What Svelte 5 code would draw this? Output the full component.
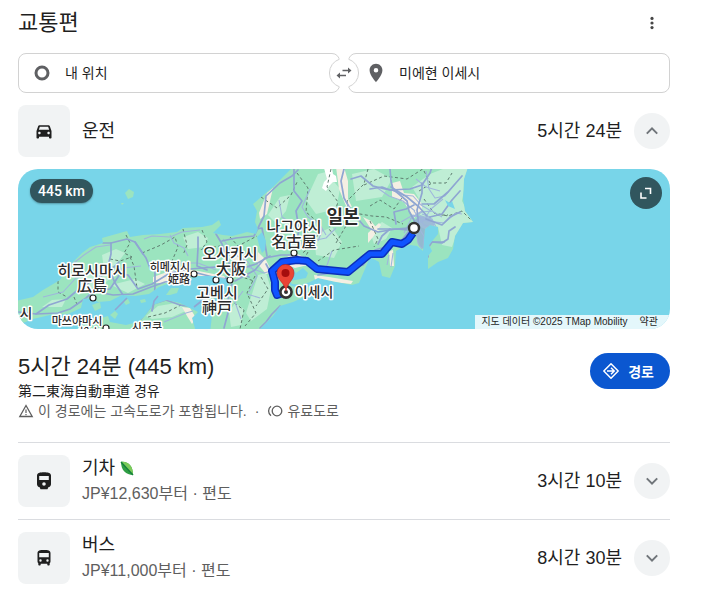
<script>
  let origin = $state('내 위치');
  let destination = $state('미에현 이세시');

  function swap() {
    [origin, destination] = [destination, origin];
  }

  const modes = [
    { id: 'train', name: '기차', eco: true, fare: 'JP¥12,630부터 · 편도', time: '3시간 10분' },
    { id: 'bus', name: '버스', eco: false, fare: 'JP¥11,000부터 · 편도', time: '8시간 30분' }
  ];

  // Map geometry, in the map's own 652 x 160 coordinate space
  const honshu =
    'M-2 132L2 131 15 128 25 121 42 111 49 99 64 84 72 78 85 74 84 69 109 62 112 68 125 66 142 65 159 63 165 59 184 58 194 56 201 51 203 56 195 64 205 66 214 67 222 65 229 63 238 65 240 60 237 53 239 42 235 35 249 23 255 18 265 8 275 -2 450 -2 446 10 445 30 447 42 455 53 445 54 437 67 435 80 430 89 420 93 410 100 410 87 414 82 411 76 420 65 420 58 412 56 407 60 406 70 405 82 399 77 392 76 385 78 378 82 377 97 372 109 364 107 361 93 352 88 347 100 341 114 334 116 318 113 300 109 292 113 284 116 274 115 272 112 288 109 290 104 285 99 278 104 274 98 272 103 272 116 280 119 292 118 290 124 284 129 275 133 262 137 255 147 242 160 240 164 192 164 194 146 196 136 205 130 210 122 211 111 198 107 180 107 165 111 152 114 141 118 131 125 117 127 104 126 92 132 80 133 75 129 65 130 63 139 50 145 32 146 15 150 5 154 -2 153Z';
  const islands = [
    'M55 163L64 156 80 150 90 147 92 153 108 156 120 153 126 148 135 136 149 131 162 134 172 139 180 143 174 149 178 163Z',
    'M-2 158L6 155 12 163H-2Z',
    'M107 24l4-4 5 3-1 5-5 2z', 'M103 34l3 0-2 2z',
    'M148 126l5-7 8 0-2 5-7 2z', 'M184 132l10-6 3 2-5 13-5 5-4-3z',
    'M74 136l8-3 1 6-6 3z', 'M92 146l5-4 3 3-3 5z', 'M105 132l5-2 2 4-4 2z', 'M122 131l5-1 1 3-5 1z'
  ];
  const pale = [
    'M60 112l16-10 14-3 8 6-15 12-17 4z', 'M84 86l14-6 9 4-9 12-12 4z',
    'M93 116l24-6 10 5-17 9z', 'M165 68l15-5 10 6-4 9-16 2z',
    'M128 147l12-10 18-3 12 7-16 7-20 2z',
    'M300 5l8-2 14 17-4 20-20 5-10-14z', 'M240 106l8-2 5 16-4 20-16 12-5-8z',
    'M334 5l22-5 18 10-10 18-26 4z', 'M296 66l18-8 10 15-8 16-18-3z', 'M352 62l12-9 10 6-6 11-12 5z',
    'M394 18L412 5 430 -2 450 0 444 32 456 54 438 66 434 78 424 76 420 58 412 56 407 60 398 56 404 40 400 28z',
    'M250 46l12-18 10-2-4 16-10 12z', 'M211 143l6-9 9 6-3 16-10 2z', 'M24 138l10-7 14-1-4 8z'
  ];
  const beige = [
    'M135 108l17-6 23-1 31 6 6 8-8 0-12-7-20-2-24 8-13 0z', 'M265 90l12-6 11 5 2 7-13 3-11-4z',
    'M318 -2h8l4 14 0 18 4 8-6-1-7-17z', 'M374 14l8-2 4 12 10 1 8 10 0 8-8 6-10-16-12-5z',
    'M240 83l8 8 6 12-6 2-9-11z', 'M212 78l10 2 4 11-8 4-6-7z',
    'M296 106l15 2 24 4-2 3-36-4z', 'M164 138l8 1 6 10-4 6-5-8z', 'M249 24l6-5-6 26-7 5-1-6z',
    'M350 64l11-10 2 2-8 12-5 6z', 'M371 82l4-1 1 16-4 0z', 'M345 48l8 4 8 10-6 1z'
  ];
  const motorways = [
    'M0 143l18 2 13-9 18-6 12-10 14-9 16-8 10-10',
    'M18 145l22-1 12-4 16-11 8-7 16-2 10-15 8 1 10 14 14-5 18-11 20-4 25-2 20 2 14 8',
    'M75 122l20 4 20-1 18-7 14-5 18-3 14-6 20 5 14 1',
    'M85 74l8 0 0 11-3 12 7 17 8 12', 'M93 74l16-4 8 3 8 12', 'M117 73l11 16 4 10 5 3 0 15-1 17-2 8',
    'M123 150l12-15 13-4 14 5 14 2 14-11 9-6 9-12', 'M180 68l0 11-1 18 10 4',
    'M198 65l6 10 6 18 8 8 20-6 14-8', 'M217 112l20-11 10-12 16-3 15 0 12 10 12 7',
    'M204 72l14-3 18-2 6-12 4-8 2-20 14-13 12-7 6-6', 'M222 63l10-2 12-2 3 16 2 12',
    'M276 0l0 22 8 10-6 10 3 18-3 18',
    'M326 0l-3 12 3 17 8 14 12 14 14 6 18-3 12 1', 'M300 106l20-3 25-7 12-15 14-4 13-6 10-13',
    'M333 10l10-3 12 10 12 3 12 2', 'M352 20l12-2 8 3 20-1 12-4 8-12 2-6',
    'M372 0l1 12 2 8 14 12 2 10 6 11', 'M373 18l16 10 12 10 8 9', 'M401 58l-2-17 5-17 0-10',
    'M404 35l12 0 14-12 14-16', 'M412 48l12-3 10-14 8-9', 'M378 55l-2-12 12-3 8-4', 'M360 60l18 0 12-1',
    'M372 60l-8 7-4 8', 'M414 73l10 1 6-4 1-8 6-4', 'M410 88l0-9 4-6 12 0', 'M408 50l16 6 8-8 10-5',
    'M262 137l-8 8-6 8-6 6', 'M248 95l8 15 2 16', 'M214 115l-4 10 1 15-5 19'
  ];
  const minorRoads = [
    'M25 128l20-5 13-14 17-6 17 4 13-8 18-2', 'M52 97l14-11 12-8 14-2', 'M126 70l8-3 18 1 12-5 18-2',
    'M152 66l4 8 10 5 4 8', 'M205 70l11 15 14 8 9 14-8 16', 'M140 100l22-6 18 0 18 7',
    'M292 20l-8 18 6 10 12 8 6 10', 'M261 31l3 17 12 8', 'M276 80l8-6 24-5 10-10',
    'M307 102l7-20', 'M230 98l16 6 14-4', 'M300 52l4 10 -4 10',
    'M358 18l13 9 14 5 12 10', 'M371 20l14 6 10 1 8 9 10 6', 'M408 2l3 18 6 9 10-2 10-12',
    'M383 53l12-7 14 6 17 2 12-10 6 1', 'M402 61l4 6 -1 12', 'M398 60l2 14 4 6', 'M404 45l8 3 4 8-6 8',
    'M400 48l14 2 4 8', 'M375 84l-2 14', 'M371 86l-2 10', 'M392 50l12-7 10-1 10 6', 'M398 10l10 8 14 4',
    'M425 30l-12 10-8 12', 'M229 125l13 4', 'M223 150l-6-17 8-11', 'M146 153l22-9 7-2',
    'M396 42l10 14 8 2', 'M395 66l6-12 11-6', 'M386 64l8-16 10-6'
  ];
  const borders =
    'M108 66l4 8-6 10 8 4-12 4-10-2M40 112l0 11 9 5M56 128l4 10M112 88l4 9 3 22M124 84l19-8 14-8 3 10-6 14M165 60l4 16-4 10M184 61l5 12-6 8M184 80l18-3M212 68l8 9 19-10M243 28l16 11 14-13 7-15M279 4l11 15-2 24 14 12-5 20-14 10M313 0l-4 18 11 15-9 27 12 15M350 0l-4 15-17 17 3 18-14 24M346 16l20-9 23 3 22-14M352 37l10-6 14 9 10-14M336 44l18 3 14 1 17 7M352 52l8 18-4 8M406 2l6 12 16 0 6-10M406 30l10 14 14 3 14-5 10 10M401 22l13-8M418 46h12M212 82l13 8-4 17 15 5M237 107l-8 17 9 20-11 13M243 108l7 12-12 17M212 131l14 10-4 19M130 148l17-4 16-8M256 98l18-7M290 83l-8 14M300 92l16-11 25-4';
  const route =
    'M395 64L390 71 384 75 374 73 364 85 352 85 330 103 299 100 289 92 279 91 264 93 254 102 257 113 257 121 259 126 265 124';
  const towns = [[75, 129], [176, 105], [198, 111], [212, 111], [276, 84], [88, 159]];
  const labels = [
    { t: '히로시마시', x: 74, y: 107, s: 15 }, { t: '広島', x: 74, y: 122, s: 15 },
    { t: '히메지시', x: 152, y: 102, s: 11 }, { t: '姫路', x: 161, y: 114, s: 11 },
    { t: '오사카시', x: 212, y: 90, s: 15 }, { t: '大阪', x: 213, y: 105, s: 15 },
    { t: '고베시', x: 199, y: 129, s: 15 }, { t: '神戸', x: 199, y: 144, s: 15 },
    { t: '마쓰야마시', x: 59, y: 156, s: 11 }, { t: '松山', x: 72, y: 168, s: 11 },
    { t: '시코쿠', x: 129, y: 162, s: 11 }, { t: '시', x: 8, y: 149, s: 14 },
    { t: '나고야시', x: 276, y: 63, s: 15 }, { t: '名古屋', x: 276, y: 78, s: 15 },
    { t: '이세시', x: 296, y: 128, s: 14 }
  ];
</script>

{#snippet chevron(up)}
  <svg width="20" height="20" viewBox="0 0 20 20" aria-hidden="true">
    <path d={up ? 'M4.8 12.6L10 7.4l5.2 5.2' : 'M4.8 7.4L10 12.6l5.2-5.2'} fill="none" stroke="#70757a" stroke-width="2" />
  </svg>
{/snippet}

<main>
  <header>
    <h1>교통편</h1>
    <button class="more" aria-label="옵션 더보기">
      <svg width="16" height="16" viewBox="0 0 16 16" fill="#474747" aria-hidden="true">
        <circle cx="8" cy="3.4" r="1.6" /><circle cx="8" cy="8" r="1.6" /><circle cx="8" cy="12.6" r="1.6" />
      </svg>
    </button>
  </header>

  <form class="fields" onsubmit={(e) => e.preventDefault()}>
    <label class="field">
      <svg width="22" height="22" viewBox="0 0 22 22" aria-hidden="true">
        <circle cx="11" cy="11" r="6" fill="none" stroke="#5f6063" stroke-width="3" />
      </svg>
      <input type="text" aria-label="출발지" bind:value={origin} />
    </label>
    <button type="button" class="swap" aria-label="출발지와 도착지 바꾸기" onclick={swap}>
      <svg width="30" height="30" viewBox="0 0 30 30" aria-hidden="true">
        <circle cx="15" cy="15" r="15" fill="#fff" />
        <path d="M10.5 1.2a14.5 14.5 0 0 0 0 27.6M19.5 1.2a14.5 14.5 0 0 1 0 27.6" fill="none" stroke="#d2d2d2" />
        <path d="M13.5 12.5H20M17 17.5h-6.5" stroke="#5f6063" stroke-width="1.6" />
        <path d="M19 9.5l3.5 3-3.5 3zM11 14.5l-3.5 3 3.5 3z" fill="#5f6063" />
      </svg>
    </button>
    <label class="field to">
      <svg width="22" height="22" viewBox="0 0 24 24" aria-hidden="true">
        <path fill="#5f6063" d="M12 2C8.13 2 5 5.13 5 9c0 5.25 7 13 7 13s7-7.75 7-13c0-3.87-3.13-7-7-7zm0 9.5a2.5 2.5 0 0 1 0-5 2.5 2.5 0 0 1 0 5z" />
      </svg>
      <input type="text" aria-label="도착지" bind:value={destination} />
    </label>
  </form>

  <section class="mode driving">
    <span class="tile">
      <svg width="20" height="20" viewBox="0 0 24 24" fill="#1f1f1f" aria-hidden="true">
        <path d="M18.92 6.01C18.72 5.42 18.16 5 17.5 5h-11c-.66 0-1.21.42-1.42 1.01L3 12v8c0 .55.45 1 1 1h1c.55 0 1-.45 1-1v-1h12v1c0 .55.45 1 1 1h1c.55 0 1-.45 1-1v-8l-2.08-5.99zM6.5 16c-.83 0-1.5-.67-1.5-1.5S5.67 13 6.5 13s1.5.67 1.5 1.5S7.33 16 6.5 16zm11 0c-.83 0-1.5-.67-1.5-1.5s.67-1.5 1.5-1.5 1.5.67 1.5 1.5-.67 1.5-1.5 1.5zM5.800 10.500l1.200-3.500h10l1.200 3.500H5.800z" />
      </svg>
    </span>
    <div class="name"><h2>운전</h2></div>
    <span class="time">5시간 24분</span>
    <button class="toggle" aria-label="운전 접기" aria-expanded="true">{@render chevron(true)}</button>
  </section>

  <div class="map">
    <svg class="canvas" viewBox="0 0 652 160" preserveAspectRatio="xMidYMid slice" role="img" aria-label="경로 지도">
      <defs>
        <clipPath id="land">
          <path d={honshu} />
          {#each islands as d}<path {d} />{/each}
        </clipPath>
      </defs>
      <rect x="-400" y="-200" width="1500" height="600" fill="#78d5e9" />
      <path d={honshu} fill="#9be4bf" />
      {#each islands as d}<path {d} fill="#9be4bf" />{/each}
      <g clip-path="url(#land)">
        {#each pale as d}<path {d} fill="#bfeed5" />{/each}
        {#each beige as d}<path {d} fill="#f4efe3" />{/each}
        <path d="M306 -1h8l1 6 3 2 1 6-4 0-4 4-3 5-4-3 2-6 3-3z" fill="#fff" />
        <path d={borders} fill="none" stroke="#5f7d70" stroke-width="1" stroke-dasharray="3 2.5" />
        <path d="M396 52l6-6 10 3 4 7-8 5-1 20-6-4-3-12-6-3z" fill="#91a6d6" opacity=".7" />
        <g fill="none" stroke="#9fb6dc" stroke-width="1.1" stroke-linejoin="round">
          {#each minorRoads as d}<path {d} />{/each}
        </g>
        <g fill="none" stroke="#8fa6d2" stroke-width="1.7" stroke-linejoin="round" stroke-linecap="round">
          {#each motorways as d}<path {d} />{/each}
        </g>
      </g>
      <path d="M239 68l5-5 4 9-1 9-3 3-3-8zM427 31l5 3 2-2 3 8-7-3z" fill="#78d5e9" />
      <path d="M134 142l2-10 4-5M176 138l14-11 9-6M97 141l12-12" fill="none" stroke="#8fa6d2" stroke-width="1.6" />

      {#each towns as [cx, cy]}
        <circle {cx} {cy} r="3" fill="#fff" stroke="#222" stroke-width="1.2" />
      {/each}
      <path d={route} fill="none" stroke="#0c2fb8" stroke-width="8" stroke-linejoin="round" />
      <path d={route} fill="none" stroke="#0f53ff" stroke-width="5" stroke-linejoin="round" />
      <circle cx="396" cy="59" r="5" fill="#fff" stroke="#333" stroke-width="2.4" />
      <circle cx="268" cy="123" r="5.6" fill="#fff" stroke="#333" stroke-width="2.6" />
      <circle cx="268" cy="123" r="2" fill="#333" />
      <path d="M268 122c-1-8-9-11-9-18a8.5 8.5 0 0 1 17 0c0 7-7 10-8 18z" fill="#ea4335" stroke="#c5221f" stroke-width=".6" />
      <circle cx="267.5" cy="104" r="4" fill="#a50e0e" />

      {#each labels as l}
        <text x={l.x} y={l.y} font-size={l.s}>{l.t}</text>
      {/each}
      <text class="country" x="325" y="54" font-size="18">일본</text>
    </svg>
    <span class="distance">445 km</span>
    <button class="expand" aria-label="지도 확대">
      <svg width="16" height="16" viewBox="0 0 16 16" fill="none" stroke="#fff" stroke-width="1.6" aria-hidden="true">
        <path d="M7 3.5h5.5V9M3 7.500v5.500h5.500" />
      </svg>
    </button>
    <div class="credits"><span>지도 데이터 ©2025 TMap Mobility</span><a href="#terms">약관</a></div>
  </div>

  <section class="summary">
    <div class="details">
      <h3>5시간 24분 (445 km)</h3>
      <p>第二東海自動車道 경유</p>
      <p class="notes">
        <svg width="16" height="16" viewBox="0 0 16 16" fill="none" stroke="#5e5e5e" aria-hidden="true">
          <path d="M8 2.500L14.200 13.500H1.800z" stroke-width="1.3" />
          <path d="M8 6.500v3.500M8 11v1.300" stroke-width="1.2" />
        </svg>
        <span>이 경로에는 고속도로가 포함됩니다.</span>
        <span class="dot">·</span>
        <svg width="16" height="16" viewBox="0 0 16 16" fill="none" stroke="#5e5e5e" stroke-width="1.3" aria-hidden="true">
          <circle cx="10" cy="8" r="4.800" />
          <path d="M4 3.200a6 6 0 0 0 0 9.600" />
        </svg>
        <span>유료도로</span>
      </p>
    </div>
    <button class="go">
      <svg width="18" height="18" viewBox="0 0 18 18" fill="none" stroke="#fff" stroke-width="1.5" aria-hidden="true">
        <path d="M9 1.800L16.200 9 9 16.200 1.800 9z" stroke-linejoin="round" />
        <path d="M5 9h7M9 5.800L12.200 9 9 12.200" />
      </svg>
      경로
    </button>
  </section>

  {#each modes as m}
    <section class="mode other">
      <span class="tile">
        <svg width="20" height="20" viewBox="0 0 20 20" aria-hidden="true">
          {#if m.id === 'train'}
            <path fill="#1f1f1f" fill-rule="evenodd" d="M10 1.200c-4 0-7 .7-7 3.300v8.700c0 1.600 1.200 2.800 2.700 3L6.500 18.200h7l.8-2c1.500-.2 2.700-1.400 2.700-3V4.500c0-2.600-3-3.300-7-3.300zM5.200 5h9.600v4H5.200zM10 11.200a1.800 1.800 0 1 1 0 3.600 1.800 1.800 0 0 1 0-3.600z" />
          {:else}
            <path fill="#1f1f1f" fill-rule="evenodd" d="M10 2C6 2 3.500 2.500 3.500 5v8.500c0 .8.300 1.400.8 1.800v1.500c0 .5.400.8.800.8h.8c.5 0 .8-.3.800-.8V15.700h6.600v1.100c0 .5.300.8.800.8h.8c.4 0 .8-.3.800-.8v-1.500c.5-.4.800-1 .8-1.800V5c0-2.500-2.500-3-6.500-3zM5.200 5h9.600v4.300H5.200zM6.500 11.300a1.200 1.200 0 1 1 0 2.400 1.200 1.200 0 0 1 0-2.400zM13.500 11.300a1.200 1.200 0 1 1 0 2.400 1.200 1.200 0 0 1 0-2.400z" />
          {/if}
        </svg>
      </span>
      <div class="name">
        <h2>
          {m.name}
          {#if m.eco}
            <svg width="14" height="16" viewBox="0 0 14 16" aria-label="친환경">
              <path d="M1 2c7-1 12 4 12 13C6 15 1 10 1 2z" fill="#2f9e44" />
              <path d="M1 2c7-1 12 4 12 13z" fill="#7ccb5a" />
              <path d="M1 2l12 13" stroke="#14803c" stroke-width="1.4" />
            </svg>
          {/if}
        </h2>
        <p>{m.fare}</p>
      </div>
      <span class="time">{m.time}</span>
      <button class="toggle" aria-label="{m.name} 펼치기" aria-expanded="false">{@render chevron(false)}</button>
    </section>
  {/each}
</main>

<style>
  :global(body) {
    background: #fff;
  }
  main {
    padding: 0 54px 12px 18px;
    font-family: 'Liberation Sans', 'Noto Sans CJK KR', sans-serif;
    color: #1f1f1f;
  }
  h1, h2, h3, p {
    margin: 0;
    font-weight: 400;
  }
  button {
    padding: 0;
    border: 0;
    background: none;
    font: inherit;
    cursor: pointer;
  }
  svg {
    display: block;
    flex: none;
  }
  header {
    display: flex;
    align-items: center;
    justify-content: space-between;
    padding: 5px 0 12px;
  }
  h1 {
    font-size: 22px;
    line-height: 36px;
  }
  .more {
    display: grid;
    place-items: center;
    width: 36px;
    height: 36px;
  }
  .fields {
    position: relative;
    display: grid;
    grid-template-columns: 1fr 1fr;
    gap: 8px;
  }
  .field {
    display: flex;
    align-items: center;
    gap: 12px;
    box-sizing: border-box;
    min-width: 0;
    height: 40px;
    padding: 0 20px 0 12px;
    border: 1px solid #d2d2d2;
    border-radius: 8px;
  }
  .field.to {
    padding-left: 16px;
  }
  input {
    flex: 1;
    min-width: 0;
    padding: 0;
    border: 0;
    outline: 0;
    background: none;
    font: inherit;
    font-size: 14px;
    line-height: 20px;
    color: #1f1f1f;
  }
  .swap {
    position: absolute;
    top: 5px;
    left: calc(50% - 15px);
  }
  .mode {
    display: flex;
    align-items: center;
    padding: 12px 0;
  }
  .other {
    border-top: 1px solid #dadce0;
  }
  .tile {
    display: grid;
    flex: none;
    place-items: center;
    width: 52px;
    height: 52px;
    border-radius: 8px;
    background: #f1f3f4;
  }
  .name {
    flex: 1;
    padding-left: 12px;
  }
  h2 {
    display: flex;
    align-items: center;
    gap: 5px;
    font-size: 18px;
    line-height: 26px;
  }
  .name p {
    font-size: 16px;
    line-height: 26px;
    color: #5e5e5e;
  }
  .time {
    font-size: 18px;
    line-height: 26px;
  }
  .toggle {
    display: grid;
    flex: none;
    place-items: center;
    width: 36px;
    height: 36px;
    margin-left: 12px;
    border-radius: 50%;
    background: #f1f3f4;
  }
  .map {
    position: relative;
    height: 160px;
    overflow: hidden;
    border-radius: 20px;
  }
  .canvas {
    width: 100%;
    height: 100%;
  }
  .canvas text {
    font-family: Roboto, 'Noto Sans CJK KR', sans-serif;
    font-weight: 500;
    text-anchor: middle;
    fill: #2b2b2b;
    stroke: #fff;
    stroke-width: 3px;
    stroke-linejoin: round;
    paint-order: stroke;
  }
  .canvas .country {
    font-weight: 700;
  }
  .distance {
    position: absolute;
    top: 10px;
    left: 12px;
    padding: 0 8px;
    border-radius: 12px;
    background: #31565e;
    box-shadow: 0 1px 2px rgb(0 0 0 / 30%);
    font-family: Roboto, sans-serif;
    font-size: 14px;
    font-weight: 500;
    line-height: 24px;
    color: #fff;
  }
  .expand {
    position: absolute;
    top: 8px;
    right: 8px;
    display: grid;
    place-items: center;
    width: 32px;
    height: 32px;
    border-radius: 50%;
    background: #31565e;
  }
  .credits {
    position: absolute;
    right: 0;
    bottom: 0;
    display: flex;
    gap: 12px;
    padding: 0 12px 0 6px;
    background: rgb(255 255 255 / 80%);
    font-size: 10px;
    line-height: 14px;
  }
  .credits a {
    color: inherit;
    text-decoration: none;
  }
  .summary {
    display: flex;
    align-items: flex-start;
    justify-content: space-between;
    padding: 24px 0 21px;
  }
  h3 {
    font-size: 22px;
    line-height: 28px;
  }
  .details p {
    font-size: 14px;
    line-height: 20px;
  }
  .details .notes {
    display: flex;
    align-items: center;
    gap: 4px;
    color: #5e5e5e;
  }
  .dot {
    padding: 0 4px;
  }
  .go {
    display: flex;
    flex: none;
    align-items: center;
    gap: 8px;
    height: 36px;
    padding: 0 16px 0 12px;
    border-radius: 18px;
    background: #0b57d0;
    font-size: 14px;
    font-weight: 700;
    color: #fff;
  }
</style>
